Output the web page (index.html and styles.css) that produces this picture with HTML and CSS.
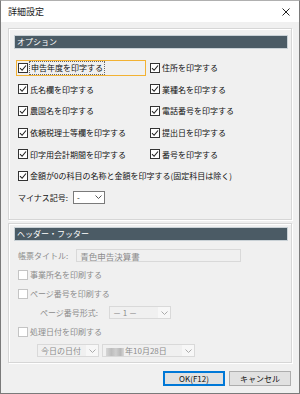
FILE: index.html
```html
<!DOCTYPE html>
<html lang="ja">
<head>
    <meta charset="UTF-8">
    <title>詳細設定</title>
    <link rel="stylesheet" href="styles.css">
</head>
<body>
    <div class="window">
        <div class="titlebar">
            <span>詳細設定</span>
            <svg class="close" width="8" height="8" viewBox="0 0 8 8"><path d="M0.5 0.5 L7.5 7.5 M7.5 0.5 L0.5 7.5" stroke="#222" stroke-width="1" fill="none"/></svg>
        </div>
        <div class="content">
            <div class="group">
                <div class="group-head">オプション</div>
                <div class="opts">
                    <label class="chk focus"><span class="box"><svg width="8" height="8" viewBox="0 0 8 8"><path d="M1 4.2 L3.1 6.3 L7 1.5" stroke="#222" stroke-width="1.1" fill="none"/></svg></span><span class="txt">申告年度を印字する</span></label>
                    <label class="chk"><span class="box"><svg width="8" height="8" viewBox="0 0 8 8"><path d="M1 4.2 L3.1 6.3 L7 1.5" stroke="#222" stroke-width="1.1" fill="none"/></svg></span><span class="txt">住所を印字する</span></label>
                    <label class="chk"><span class="box"><svg width="8" height="8" viewBox="0 0 8 8"><path d="M1 4.2 L3.1 6.3 L7 1.5" stroke="#222" stroke-width="1.1" fill="none"/></svg></span><span class="txt">氏名欄を印字する</span></label>
                    <label class="chk"><span class="box"><svg width="8" height="8" viewBox="0 0 8 8"><path d="M1 4.2 L3.1 6.3 L7 1.5" stroke="#222" stroke-width="1.1" fill="none"/></svg></span><span class="txt">業種名を印字する</span></label>
                    <label class="chk"><span class="box"><svg width="8" height="8" viewBox="0 0 8 8"><path d="M1 4.2 L3.1 6.3 L7 1.5" stroke="#222" stroke-width="1.1" fill="none"/></svg></span><span class="txt">農園名を印字する</span></label>
                    <label class="chk"><span class="box"><svg width="8" height="8" viewBox="0 0 8 8"><path d="M1 4.2 L3.1 6.3 L7 1.5" stroke="#222" stroke-width="1.1" fill="none"/></svg></span><span class="txt">電話番号を印字する</span></label>
                    <label class="chk"><span class="box"><svg width="8" height="8" viewBox="0 0 8 8"><path d="M1 4.2 L3.1 6.3 L7 1.5" stroke="#222" stroke-width="1.1" fill="none"/></svg></span><span class="txt">依頼税理士等欄を印字する</span></label>
                    <label class="chk"><span class="box"><svg width="8" height="8" viewBox="0 0 8 8"><path d="M1 4.2 L3.1 6.3 L7 1.5" stroke="#222" stroke-width="1.1" fill="none"/></svg></span><span class="txt">提出日を印字する</span></label>
                    <label class="chk"><span class="box"><svg width="8" height="8" viewBox="0 0 8 8"><path d="M1 4.2 L3.1 6.3 L7 1.5" stroke="#222" stroke-width="1.1" fill="none"/></svg></span><span class="txt">印字用会計期間を印字する</span></label>
                    <label class="chk"><span class="box"><svg width="8" height="8" viewBox="0 0 8 8"><path d="M1 4.2 L3.1 6.3 L7 1.5" stroke="#222" stroke-width="1.1" fill="none"/></svg></span><span class="txt">番号を印字する</span></label>
                    <label class="chk wide"><span class="box"><svg width="8" height="8" viewBox="0 0 8 8"><path d="M1 4.2 L3.1 6.3 L7 1.5" stroke="#222" stroke-width="1.1" fill="none"/></svg></span><span class="txt">金額が0の科目の名称と金額を印字する(固定科目は除く)</span></label>
                    <div class="field wide">
                        <span class="lbl">マイナス記号:</span>
                        <div class="select minus"><span>-</span><span class="arrow"><svg width="7" height="4" viewBox="0 0 7 4"><path d="M0.5 0.5 L3.5 3.5 L6.5 0.5" stroke="#555" fill="none"/></svg></span></div>
                    </div>
                </div>
            </div>

            <div class="group second">
                <div class="group-head">ヘッダー・フッター</div>
                <div class="rows">
                    <div class="field off">
                        <span class="lbl">帳票タイトル:</span>
                        <div class="input title-input">青色申告決算書</div>
                    </div>
                    <label class="chk off"><span class="box"></span><span class="txt">事業所名を印刷する</span></label>
                    <label class="chk off"><span class="box"></span><span class="txt">ページ番号を印刷する</span></label>
                    <div class="field off indent-page">
                        <span class="lbl">ページ番号形式:</span>
                        <div class="select page-fmt"><span>－ 1 －</span><span class="arrow"><svg width="7" height="4" viewBox="0 0 7 4"><path d="M0.5 0.5 L3.5 3.5 L6.5 0.5" stroke="#aaa" fill="none"/></svg></span></div>
                    </div>
                    <label class="chk off"><span class="box"></span><span class="txt">処理日付を印刷する</span></label>
                    <div class="field off indent-date">
                        <div class="select today"><span>今日の日付</span><span class="arrow"><svg width="7" height="4" viewBox="0 0 7 4"><path d="M0.5 0.5 L3.5 3.5 L6.5 0.5" stroke="#aaa" fill="none"/></svg></span></div>
                        <div class="select date"><span><span class="blur"></span>年10月28日</span><span class="arrow"><svg width="7" height="4" viewBox="0 0 7 4"><path d="M0.5 0.5 L3.5 3.5 L6.5 0.5" stroke="#aaa" fill="none"/></svg></span></div>
                    </div>
                </div>
            </div>

            <div class="actions">
                <button class="btn default">OK(F12)</button>
                <button class="btn">キャンセル</button>
            </div>
        </div>
    </div>
</body>
</html>
```

FILE: styles.css
```css
* {
    box-sizing: border-box;
}
body {
    margin: 0;
    font-family: "Noto Sans CJK JP", "Noto Sans", sans-serif;
    font-size: 8px;
    color: #111;
}
.window {
    width: 300px;
    height: 394px;
    border: 1px solid #7a7a7a;
    border-top-color: #b0b0b0;
    background: #f0f0f0;
    display: flex;
    flex-direction: column;
}
.titlebar {
    height: 21px;
    flex: none;
    background: #fff;
    display: flex;
    align-items: center;
    justify-content: space-between;
    padding: 0 9px 0 7px;
    font-size: 9px;
    color: #222;
}
.content {
    padding: 6px 7px 0 7px;
}
.group {
    border: 1px solid #d6d6d6;
    box-shadow: inset 1px 1px 0 #fff, 1px 1px 0 #fff;
    padding: 6px 3px 11px 5px;
}
.group.second {
    margin-top: 3px;
    padding-top: 3px;
    padding-bottom: 2px;
}
.group-head {
    height: 14px;
    background: #4b5b65;
    border: 1px solid #c9d1d6;
    color: #fff;
    padding-left: 2px;
    line-height: 12px;
}
.opts {
    margin-top: 8px;
    padding-left: 2px;
    display: grid;
    grid-template-columns: 132px 1fr;
    grid-auto-rows: 21.6px;
    align-items: center;
}
.wide {
    grid-column: 1 / span 2;
}
.chk {
    display: flex;
    align-items: center;
    gap: 2px;
    height: 16px;
    padding: 0 1px;
    border: 1px solid transparent;
}
.chk.focus {
    border-color: #f2b233;
    width: 130px;
}
.chk.focus .txt {
    outline: 1px dotted #666;
    outline-offset: 0;
    padding: 0 1px;
    line-height: 12px;
}
.box {
    width: 10px;
    height: 10px;
    flex: none;
    border: 1px solid #333;
    background: #fff;
    display: flex;
    align-items: center;
    justify-content: center;
}
.chk.off {
    color: #8c8c8c;
}
.chk.off .box {
    border-color: #c4c4c4;
}
.field {
    display: flex;
    align-items: center;
    height: 19px;
}
.field .lbl {
    margin-left: 2px;
}
.field.off {
    color: #8c8c8c;
}
.select, .input {
    height: 13px;
    display: flex;
    align-items: center;
    justify-content: space-between;
    padding-left: 3px;
}
.select .arrow {
    width: 12px;
    height: 11px;
    display: flex;
    align-items: center;
    justify-content: center;
}
.minus {
    width: 32px;
    margin-left: 5px;
    background: #fff;
    border: 1px solid #7a7a7a;
    color: #222;
}
.rows {
    margin-top: 5px;
    padding-left: 2px;
    display: flex;
    flex-direction: column;
}
.rows .chk {
    height: 19px;
}
.title-input {
    width: 165px;
    margin-left: 8px;
    border: 1px solid #d9d9d9;
    color: #8c8c8c;
    font-size: 8.5px;
}
.off .select {
    border: 1px solid #d9d9d9;
    background: #f0f0f0;
}
.off .select .arrow {
    background: #f7f7f7;
}
.indent-page .lbl {
    margin-left: 24px;
}
.page-fmt {
    width: 62px;
    margin-left: 11px;
}
.indent-date {
    padding-left: 21px;
    gap: 3px;
}
.today {
    width: 62px;
}
.date {
    width: 93px;
}
.blur {
    display: inline-block;
    width: 18px;
    height: 8px;
    vertical-align: middle;
    margin-right: 1px;
    background: linear-gradient(90deg, #d6d6d6, #bdbdbd 30%, #cfcfcf 55%, #b8b8b8 80%, #d8d8d8);
    filter: blur(0.6px);
}
.actions {
    margin-top: 8px;
    padding-right: 1px;
    display: flex;
    justify-content: flex-end;
    gap: 4px;
}
.btn {
    width: 62px;
    height: 15px;
    padding: 0;
    font-family: inherit;
    font-size: 8px;
    color: #111;
    background: #e1e1e1;
    border: 1px solid #adadad;
}
.btn.default {
    border-color: #0078d7;
    box-shadow: inset 0 0 0 1px #0078d7;
}
```
